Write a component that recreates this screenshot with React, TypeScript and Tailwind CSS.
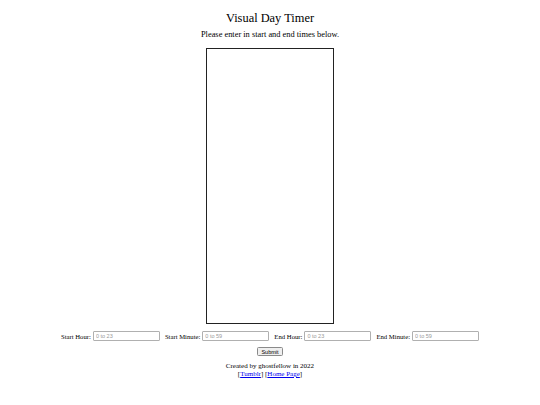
import { useState } from "react";

const fields = [
  { label: "Start Hour:", placeholder: "0 to 23" },
  { label: "Start Minute:", placeholder: "0 to 59" },
  { label: "End Hour:", placeholder: "0 to 23" },
  { label: "End Minute:", placeholder: "0 to 59" },
];

export default function App() {
  const [values, setValues] = useState<string[]>(["", "", "", ""]);

  return (
    <div className="w-[540px] h-[405px] bg-white text-black flex flex-col items-center font-['Liberation_Serif',serif]">
      <h2 className="mt-[11px] text-[12.4px] leading-[14px]">Visual Day Timer</h2>
      <p className="mt-[5px] text-[8.4px] leading-[10px]">
        Please enter in start and end times below.
      </p>

      {/* timer column */}
      <div className="mt-[8px] w-[128px] h-[276px] border-[1.5px] border-[#222]" />

      <div className="mt-[7px] flex items-center gap-[5px]">
        {fields.map((f, i) => (
          <label key={f.label} className="flex items-center gap-[2px] text-[6.7px] leading-[9px]">
            {f.label}
            <input
              type="text"
              value={values[i]}
              onChange={(e) => {
                const next = [...values];
                next[i] = e.target.value;
                setValues(next);
              }}
              placeholder={f.placeholder}
              className="w-[67px] h-[10px] px-[2px] border-[0.5px] border-[#b0b0b0] rounded-[1px] text-[5.5px] leading-[8px] font-['Liberation_Sans',sans-serif] placeholder:text-[#9a9a9a] outline-none"
            />
          </label>
        ))}
      </div>

      <button
        type="button"
        className="mt-[6px] px-[3px] h-[9px] bg-[#efefef] border-[0.5px] border-[#8a8a8a] rounded-[1.5px] text-[5.5px] leading-[8px] font-['Liberation_Sans',sans-serif]"
      >
        Submit
      </button>

      <div className="mt-[6px] text-[7px] leading-[8px] text-center">
        <div>Created by ghostfellow in 2022</div>
        <div>
          [<a href="#" className="text-[#0000ee] underline">Tumblr</a>]{" "}
          [<a href="#" className="text-[#0000ee] underline">Home Page</a>]
        </div>
      </div>
    </div>
  );
}
